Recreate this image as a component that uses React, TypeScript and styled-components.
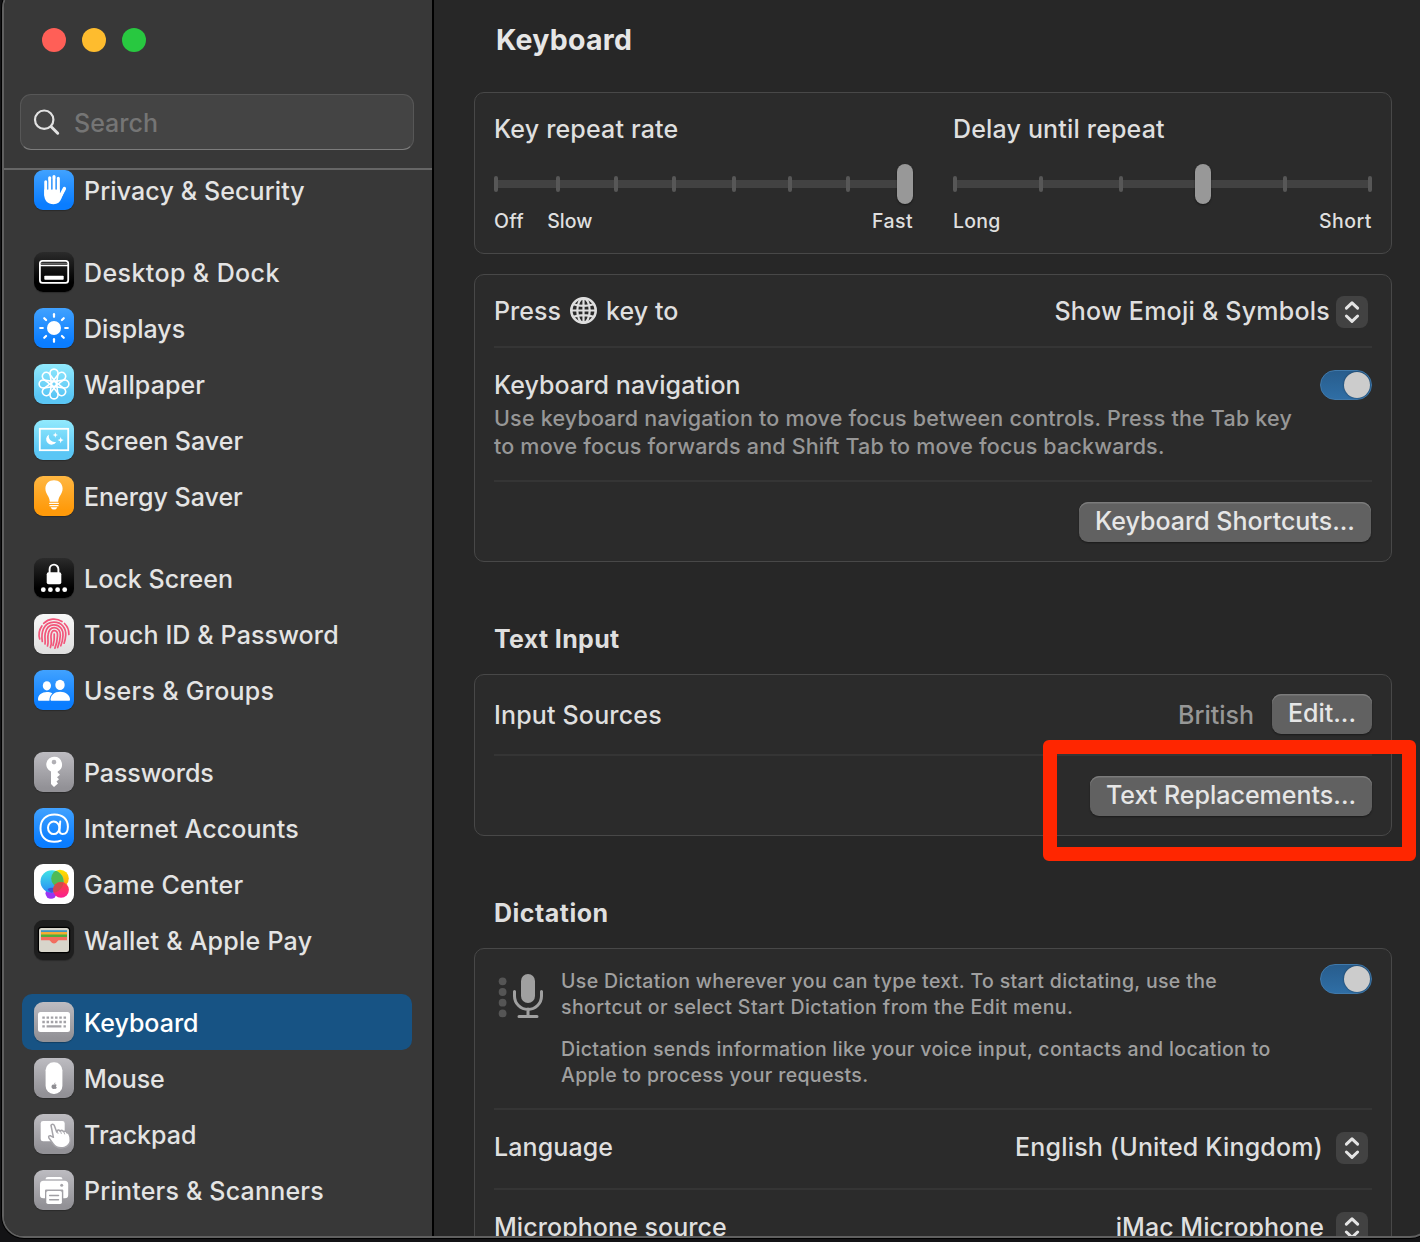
import React from "react";
import styled, { createGlobalStyle, css } from "styled-components";

const GlobalStyle = createGlobalStyle`
  html, body { margin: 0; padding: 0; background: #131315; overflow: hidden; }
  * { box-sizing: border-box; }
  body { font-family: Inter, "Liberation Sans", sans-serif; font-size: 25px; font-weight: 450; color: #dfdfdf; }
`;

const Desktop = styled.div`
  width: 1420px;
  height: 1242px;
  overflow: hidden;
  background: #131315;
  display: flex;
`;

const Window = styled.div`
  display: flex;
  flex: none;
  width: 1430px;
  height: 1252px;
  margin: -14px 0 0 2px;
  border: 2px solid #606060;
  border-radius: 22px;
  box-shadow: 0 0 0 1px #000;
  background: #272727;
  overflow: hidden;
`;

const Sidebar = styled.aside`
  flex: none;
  width: 430px;
  padding-top: 12px;
  display: flex;
  flex-direction: column;
  background: #383838;
  border-right: 2px solid #000;
`;

const TrafficLights = styled.div`
  display: flex;
  gap: 16px;
  padding: 28px 0 0 38px;
`;

const Light = styled.span<{ $color: string }>`
  width: 24px;
  height: 24px;
  border-radius: 50%;
  background: ${(p) => p.$color};
`;

const SearchField = styled.div`
  display: flex;
  align-items: center;
  gap: 13px;
  height: 56px;
  margin: 42px 18px 0 16px;
  padding: 0 12px;
  border: 1px solid #575757;
  border-bottom-color: #7c7c7c;
  border-radius: 11px;
  background: #444444;
`;

type TextProps = { $track?: number };

const tracking = css<TextProps>`
  white-space: nowrap;
  letter-spacing: ${(p) => p.$track ?? 0}px;
`;

const Placeholder = styled.span<TextProps>`
  color: #757575;
  padding-top: 1px;
  ${tracking}
`;

const List = styled.nav`
  display: flex;
  flex-direction: column;
  gap: 26px;
  margin-top: 18px;
  border-top: 2px solid #666666;
`;

const Group = styled.div`
  display: flex;
  flex-direction: column;
  &:first-child { margin-top: -8px; }
`;

const Item = styled.div<{ $selected?: boolean }>`
  display: flex;
  align-items: center;
  gap: 10px;
  height: 56px;
  margin: 0 20px 0 18px;
  padding-left: 12px;
  border-radius: 10px;
  color: ${(p) => (p.$selected ? "#ffffff" : "#e4e4e4")};
  background: ${(p) => (p.$selected ? "#175384" : "transparent")};
`;

const ItemLabel = styled.span<TextProps>`
  padding-top: 1px;
  ${tracking}
`;

const Tile = styled.span<{ $fill: string }>`
  display: flex;
  align-items: center;
  justify-content: center;
  flex: none;
  width: 40px;
  height: 40px;
  border-radius: 9px;
  background: ${(p) => p.$fill};
  box-shadow: 0 1px 1px rgba(0, 0, 0, 0.25);
  svg { display: block; }
`;

const Main = styled.main`
  flex: none;
  width: 986px;
  padding: 12px 28px 0 40px;
  display: flex;
  flex-direction: column;
`;

const Title = styled.h1<TextProps>`
  flex: none;
  margin: 0 0 0 22px;
  height: 92px;
  padding-top: 21px;
  font-size: 28.5px;
  line-height: 38px;
  font-weight: 680;
  color: #e6e6e6;
  ${tracking}
`;

const Heading = styled.h2<TextProps>`
  flex: none;
  margin: 0 0 0 20px;
  height: 112px;
  padding-top: 61px;
  font-size: 25px;
  line-height: 32px;
  font-weight: 650;
  color: #dfdfdf;
  ${tracking}
`;

const Card = styled.section<{ $height: number }>`
  flex: none;
  height: ${(p) => p.$height}px;
  padding: 0 19px;
  border: 1px solid #484848;
  border-radius: 10px;
  background: #2b2b2b;
  & + & { margin-top: 20px; }
`;

const SliderPair = styled.div`
  display: grid;
  grid-template-columns: 419px 419px;
  column-gap: 40px;
  padding-top: 20px;
`;

const SliderLabel = styled.div<TextProps>`
  height: 32px;
  line-height: 32px;
  ${tracking}
`;

const Track = styled.div`
  position: relative;
  height: 8px;
  margin: 35px 0 17px;
  background: #424242;
`;

const Tick = styled.i`
  position: absolute;
  top: -4px;
  width: 4px;
  height: 16px;
  border-radius: 2px;
  background: #575757;
`;

const Thumb = styled.i`
  position: absolute;
  top: -16px;
  width: 16px;
  height: 40px;
  border-radius: 8px;
  background: #989898;
  box-shadow: 0 1px 2px rgba(0, 0, 0, 0.5);
`;

const Legend = styled.div`
  display: flex;
  justify-content: space-between;
  height: 32px;
  line-height: 32px;
  font-size: 19.5px;
`;

const LegendGroup = styled.span`
  display: flex;
  gap: 23px;
`;

const LegendText = styled.span<TextProps>`
  ${tracking}
`;

const Row = styled.div<{ $height: number; $line?: boolean; $shift?: number }>`
  display: flex;
  align-items: center;
  justify-content: space-between;
  height: ${(p) => p.$height}px;
  padding-top: ${(p) => Math.max(p.$shift ?? 0, 0) * 2}px;
  padding-bottom: ${(p) => Math.max(-(p.$shift ?? 0), 0) * 2}px;
  border-bottom: ${(p) => (p.$line ? "2px solid #353535" : "none")};
`;

const TopRow = styled(Row)<{ $pad: number }>`
  align-items: flex-start;
  padding-top: ${(p) => p.$pad}px;
`;

const RowLabel = styled.span<TextProps>`
  display: flex;
  align-items: center;
  line-height: 32px;
  ${tracking}
  svg { margin: 0 9px 1px; display: block; }
`;

const Value = styled.span<TextProps & { $gap: number }>`
  margin-right: ${(p) => p.$gap}px;
  ${tracking}
`;

const Muted = styled.span<TextProps>`
  color: #979797;
  margin-right: 18px;
  padding-top: 2px;
  ${tracking}
`;

const Trailing = styled.div<{ $inset?: number; $raise?: number }>`
  display: flex;
  align-items: center;
  margin-left: auto;
  margin-right: ${(p) => p.$inset ?? 0}px;
  margin-top: ${(p) => -(p.$raise ?? 0)}px;
`;

const Stepper = styled.span`
  display: flex;
  align-items: center;
  justify-content: center;
  width: 32px;
  height: 32px;
  margin-top: 2px;
  border-radius: 8px;
  background: #424242;
`;

const Switch = styled.span`
  display: flex;
  justify-content: flex-end;
  flex: none;
  width: 52px;
  height: 30px;
  padding: 1px;
  border: 1px solid #4079ab;
  border-radius: 15px;
  background: linear-gradient(#285d8d, #2f6ea5);
`;

const Knob = styled.i`
  width: 26px;
  height: 26px;
  border-radius: 50%;
  background: #cccccc;
  box-shadow: 0 0 2px rgba(0, 0, 0, 0.5);
`;

const Button = styled.button<TextProps & { $width: number }>`
  width: ${(p) => p.$width}px;
  height: 40px;
  padding: 0 0 2px;
  border: 0;
  border-radius: 9px;
  font: inherit;
  line-height: 36px;
  color: #e6e6e6;
  background: #616161;
  box-shadow: inset 0 1.5px 0 #7b7b7b, 0 1px 2px rgba(0, 0, 0, 0.4);
  ${tracking}
`;

const NavText = styled.div`
  display: flex;
  flex-direction: column;
`;

const HelpText = styled.div`
  display: flex;
  flex-direction: column;
  margin-top: 3px;
`;

const Help = styled.span<TextProps>`
  font-size: 21.5px;
  line-height: 28px;
  color: #979797;
  ${tracking}
`;

const DictationText = styled.div`
  display: flex;
  flex-direction: column;
  gap: 16px;
  margin-left: 16px;
`;

const Paragraph = styled.div`
  display: flex;
  flex-direction: column;
`;

const Small = styled.span<TextProps>`
  font-size: 19.5px;
  line-height: 26px;
  color: #a0a0a0;
  ${tracking}
`;

const Callout = styled.div`
  position: absolute;
  left: 1043px;
  top: 740px;
  width: 373px;
  height: 121px;
  border: 14px solid #ff2600;
  border-radius: 6px;
`;

const Icon = ({ children }: { children: React.ReactNode }) => (
  <svg width="40" height="40" viewBox="0 0 40 40" fill="none" strokeLinecap="round" strokeLinejoin="round">
    {children}
  </svg>
);

const Chevrons = () => (
  <svg width="32" height="32" viewBox="0 0 32 32" fill="none" stroke="#e4e4e4" strokeWidth="3" strokeLinecap="round" strokeLinejoin="round">
    <path d="M10.4 12.2 16 6.8l5.6 5.4M10.4 20 16 25.4l5.6-5.4" />
  </svg>
);

const Globe = () => (
  <svg width="27" height="27" viewBox="0 0 27 27" fill="none" stroke="#dfdfdf" strokeWidth="2.2">
    <circle cx="13.5" cy="13.5" r="12.2" strokeWidth="2.6" />
    <ellipse cx="13.5" cy="13.5" rx="6.2" ry="12.2" />
    <path d="M13.5 1v25M1 13.5h25M3.2 7.2q10.3 3.4 20.6 0M3.2 19.8q10.3-3.4 20.6 0" />
  </svg>
);

const MicIcon = () => (
  <svg width="51" height="52" viewBox="0 0 51 52" fill="none">
    <g fill="#555555">
      <circle cx="8.6" cy="13.3" r="3.9" />
      <circle cx="8.6" cy="24" r="3.9" />
      <circle cx="8.6" cy="34.7" r="3.9" />
      <circle cx="8.6" cy="45.4" r="3.9" />
    </g>
    <rect x="27" y="6" width="14" height="29" rx="7" fill="#a0a0a0" />
    <path d="M20.5 23.5v4.5a13.3 13.3 0 0 0 27 0v-4.5M34 41v7M25 48.500h18" stroke="#a0a0a0" strokeWidth="3" strokeLinecap="round" />
  </svg>
);

const SearchIcon = () => (
  <svg width="28" height="28" viewBox="0 0 28 28" fill="none" stroke="#e2e2e2" strokeLinecap="round">
    <circle cx="11.2" cy="11.7" r="9.2" strokeWidth="2.200" />
    <path d="m18.200 18.700 6.500 6.500" strokeWidth="3" />
  </svg>
);

const HandIcon = () => (
  <Icon>
    <g stroke="#fff" strokeWidth="3.1">
      <path d="M11.8 11.8V25M15.7 7.8V22M20 6.6V22M24.3 8.3V22" />
      <path d="M30.400 18.600 27 25" strokeWidth="3.4" />
    </g>
    <path d="M10.25 19.500h15.6v3.5l1.5.3 3.6-3.7-3.4 8.7c-1.5 3.8-3.9 5.9-8 5.9-5.8 0-9.3-3.6-9.3-9.5z" fill="#fff" />
    <path d="M13.75 11v8M17.85 9v10M22.15 9v10" stroke="#2f93fb" strokeWidth=".9" />
  </Icon>
);

const DockIcon = () => (
  <Icon>
    <rect x="5.9" y="8.9" width="28.3" height="22" rx="2.6" stroke="#fff" strokeWidth="1.8" />
    <path d="M6 13.600h28" stroke="#fff" strokeWidth="1.5" />
    <path d="M7 11.300h26" stroke="#777" strokeWidth="1" />
    <rect x="10.3" y="23.8" width="19.4" height="4" rx=".8" fill="#fff" />
  </Icon>
);

const SunIcon = () => (
  <Icon>
    <circle cx="20" cy="20" r="7" fill="#fff" />
    {[0, 45, 90, 135, 180, 225, 270, 315].map((a) => (
      <path key={a} d="M20 6.200v2.6" stroke="#fff" strokeWidth="2.2" transform={`rotate(${a} 20 20)`} />
    ))}
  </Icon>
);

const FlowerIcon = () => (
  <Icon>
    {[0, 45, 90, 135, 180, 225, 270, 315].map((a) => (
      <path
        key={a}
        d="M17.7 22 16.1 10A4 4 0 1 1 23.900 10L22.300 22"
        stroke="#fff"
        strokeWidth="1.6"
        transform={`rotate(${a} 20 20)`}
      />
    ))}
  </Icon>
);

const SaverIcon = () => (
  <Icon>
    <rect x="5.8" y="8.8" width="28.4" height="21.4" stroke="#fff" strokeWidth="1.8" strokeLinejoin="miter" />
    <path d="M15 14.500a5.4 5.4 0 1 0 7.3 7.3 5.9 5.9 0 0 1-7.3-7.3z" fill="#fff" />
    <path d="m21.300 12.300.7 2 2 .7-2 .7-.7 2-.7-2-2-.7 2-.7zM26.700 17l.8 2.300 2.300.8-2.300.8-.8 2.300-.8-2.300-2.300-.8 2.300-.8z" fill="#fff" />
  </Icon>
);

const BulbIcon = () => (
  <Icon>
    <path d="M20 4.300c-5 0-8.600 3.500-8.600 8.200 0 5.700 3.900 7 4.400 13.200h8.400c.5-6.200 4.400-7.500 4.400-13.200 0-4.700-3.600-8.200-8.600-8.200z" fill="#fff" />
    <path d="M15.700 27.400h8.600M16 29.700h8" stroke="#fff" strokeWidth="1.3" />
    <path d="M16.600 31.300h6.800q-.8 2.300-3.400 2.300t-3.400-2.300z" fill="#fff" />
  </Icon>
);

const LockIcon = () => (
  <Icon>
    <rect x="12.7" y="14.2" width="14.6" height="12" rx="2" fill="#fff" />
    <path d="M15.600 15v-3.700a4.400 4.700 0 0 1 8.800 0V15" stroke="#fff" strokeWidth="1.9" />
    <g fill="#fff">
      <circle cx="9.3" cy="31.7" r="2.4" />
      <circle cx="16.4" cy="31.7" r="2.4" />
      <circle cx="23.6" cy="31.7" r="2.4" />
      <circle cx="30.7" cy="31.7" r="2.4" />
    </g>
  </Icon>
);

const FingerprintIcon = () => (
  <Icon>
    <g stroke="#f2567a" strokeWidth="1.7">
      <path d="M9.700 9.300A14.800 14.800 0 0 1 28 7.500" />
      <path d="M30.500 9.500A14.800 14.800 0 0 1 34.900 20.500" />
      <path d="M5.700 25A15 15 0 0 1 7.900 12" />
      <path d="M8.300 27.500C7 19 9 8.100 20 8.100c8 0 12.300 6.400 11.700 13.400-.2 3-.7 5.400-1.600 7.700" />
      <path d="M11 30c.8-3.500-.8-5.500.2-10.500C12.200 14.300 15.500 10.900 20 10.900c6 0 9.400 4.600 9 10.600-.2 3.900-1 7.200-2.200 10.300" />
      <path d="M13.500 32c1.500-4.500-.3-7 .6-11.500.7-4.200 3-6.800 6-6.800 4.200 0 6.500 3.300 6.200 7.800-.2 4.500-1.200 8.500-2.600 12" />
      <path d="M16.400 33.500c2-5 .2-8 .6-12 .3-3 1.500-4.900 3.200-4.900 2.500 0 3.500 2 3.300 5-.2 4.700-1.100 9-2.600 12.600" />
      <path d="M20.200 20c.4 4.500-.1 8-1.200 11.500" />
    </g>
  </Icon>
);

const UsersIcon = () => (
  <Icon>
    <g fill="#fff">
      <ellipse cx="12.9" cy="15.8" rx="4.1" ry="4.6" />
      <ellipse cx="26" cy="14.9" rx="4.7" ry="5.2" />
      <path d="M4 29.200c0-4.300 4-7.200 8.900-7.200 2.100 0 4 .5 5.500 1.400-1.800 1.400-2.900 3.600-3 7.400H5.200c-.8 0-1.200-.6-1.200-1.600z" />
      <path d="M16.500 29.500c0-4.300 4.100-7.800 9.600-7.800s9.900 3.500 9.900 7.800c0 .9-.4 1.300-1.200 1.300H17.700c-.8 0-1.200-.4-1.200-1.300z" />
    </g>
  </Icon>
);

const KeyIcon = () => (
  <Icon>
    <path
      fillRule="evenodd"
      fill="#fff"
      d="M20 4.800a7.700 7.700 0 0 0-3 14.800v12.300l3 3 4-3.500-1.500-1.900 2.500-2.300-2-2 3-2.400-2.300-2.200V19.400A7.700 7.700 0 0 0 20 4.800zm0 3a2.300 2.300 0 1 1 0 4.600 2.300 2.300 0 0 1 0-4.600z"
    />
  </Icon>
);

const AtIcon = () => (
  <Icon>
    <g stroke="#fff" strokeWidth="2">
      <ellipse cx="19.7" cy="19.8" rx="5.7" ry="6.3" />
      <path d="M26.200 13.500 25.500 22c-.2 2.500.8 4 3.100 4 3.300 0 5.300-2.700 5.300-7.300 0-7.300-5.200-12.300-13.300-12.300C12 6.400 6.500 11.800 6.500 20.200c0 8.600 5.500 13.600 13.700 13.600 2.800 0 5-.4 6.600-1.100" />
    </g>
  </Icon>
);

const GameIcon = () => (
  <Icon>
    <defs>
      <linearGradient id="gcBlue" x1="0" y1="0" x2="0" y2="1">
        <stop offset="0" stopColor="#3fe3e6" />
        <stop offset="1" stopColor="#2b8cf5" />
      </linearGradient>
      <linearGradient id="gcYellow" x1="0" y1="0" x2="0" y2="1">
        <stop offset="0" stopColor="#fbe600" />
        <stop offset="1" stopColor="#ff9d0a" />
      </linearGradient>
      <linearGradient id="gcRed" x1="0" y1="0" x2="0" y2="1">
        <stop offset="0" stopColor="#ff453d" />
        <stop offset="1" stopColor="#fa1d92" />
      </linearGradient>
      <clipPath id="gcClip"><ellipse cx="18" cy="17.5" rx="11.5" ry="11.2" /></clipPath>
    </defs>
    <circle cx="17" cy="29.3" r="5.5" fill="#9b35f2" />
    <circle cx="26" cy="14.5" r="8.8" fill="url(#gcYellow)" />
    <ellipse cx="18" cy="17.5" rx="11.5" ry="11.2" fill="url(#gcBlue)" />
    <circle cx="26" cy="14.5" r="8.8" fill="#4fbb55" clipPath="url(#gcClip)" />
    <path d="M13.500 25q5-2.500 8.500 0-1 3-4.500 3.700-3-.6-4-3.700z" fill="#3a55d8" />
    <circle cx="27" cy="25.8" r="7.9" fill="url(#gcRed)" />
    <circle cx="27" cy="25.8" r="7.9" fill="#c3504a" fillOpacity=".75" clipPath="url(#gcClip)" />
  </Icon>
);

const WalletIcon = () => (
  <Icon>
    <rect x="3.8" y="6.8" width="32.4" height="26.4" rx="3.5" fill="#000" />
    <rect x="5" y="8" width="30" height="24" rx="2.5" fill="#d8d5cb" />
    <rect x="7" y="10.2" width="26" height="3" fill="#3e94c0" />
    <rect x="7" y="12" width="26" height="3" fill="#f5ab32" />
    <rect x="7" y="14.5" width="26" height="3" fill="#4fae3c" />
    <path d="M7 17h26v3.300H25q-1 0-1.700 1.200-1.200 2-3.300 2t-3.300-2q-.7-1.200-1.700-1.200H7z" fill="#f26d5f" />
  </Icon>
);

const KeyboardIcon = () => (
  <Icon>
    <rect x="4" y="10" width="32" height="20" rx="2.5" fill="#fff" />
    <g stroke="#a3a2a7" strokeWidth="2.3" strokeLinecap="butt">
      <path d="M8.300 15.700h24" strokeDasharray="2.5 1.75" />
      <path d="M8.300 20h24" strokeDasharray="2.5 1.75" />
      <path d="M8.300 24.400h2.500M12.600 24.400h14.800M29.500 24.400h2.400" />
    </g>
  </Icon>
);

const MouseIcon = () => (
  <Icon>
    <rect x="11.6" y="4.3" width="16.8" height="31.6" rx="8" fill="#fff" />
    <path d="M20 26.700c1-.6 2.200-.4 2.700.4-1 .8-.8 2 .1 2.500-.5 1.400-1.300 1.700-2.600 1.200-1.300.5-2.100.1-2.600-1.200-.5-1.700.6-3.600 2.400-2.900z" fill="#8f8e93" />
    <path d="M20.200 26.300q0-1.400 1.300-1.700 0 1.300-1.300 1.700z" fill="#8f8e93" />
  </Icon>
);

const TrackpadIcon = () => (
  <Icon>
    <rect x="6.7" y="7" width="24" height="20.3" rx="2.4" fill="#fff" />
    <path
      d="M17 11.300c.5-1.400 2.600-1.500 3.200 0L22.700 18l.5-1.400c.9-.9 2.200-.6 2.800.5l.5-.4c1.200-.7 2.400-.2 2.900 1l.6-.3c1.300-.5 2.400 0 2.800 1.300l.5.1c1.700.3 2.300 2 2.700 4.400 1 5.200-1.200 9-5.600 10.200-4.200 1.100-8.700-.2-11.300-3.700l-4.300-6c-.6-1.200.5-2.400 1.800-1.900l2.800 1.500z"
      fill="#fff"
      stroke="#a6a5aa"
      strokeWidth="1.5"
    />
    <path d="m23.200 17 .8 2.500M26.500 17l.8 2.500M30 18l.6 2" stroke="#a6a5aa" strokeWidth=".9" />
  </Icon>
);

const PrinterIcon = () => (
  <Icon>
    <path d="M11.500 9.300q0-2.300 2.500-2.300h12q2.500 0 2.500 2.300z" fill="#fff" />
    <path d="M9.500 10.800h21.200q3.500 0 3.500 3.500V25q0 3.300-3.300 3.300h-1.600V20.500q0-1-1-1H12q-1 0-1 1v7.800H9.300q-3.300 0-3.300-3.300V14.300q0-3.500 3.500-3.500z" fill="#fff" />
    <circle cx="27.7" cy="15.3" r="1.5" fill="#a6a5aa" />
    <rect x="12.3" y="21" width="15.6" height="13" rx="1.7" fill="#fff" />
    <path d="M15.700 25.500h8.800M15.700 29.800h8.800" stroke="#a09fa4" strokeWidth="1.5" />
  </Icon>
);

const blue = "linear-gradient(#41a2ff, #0a7dff 85%)";
const black = "linear-gradient(#2b2b2b, #000 75%)";
const cyan = "linear-gradient(#92eafd, #5ac6f5 80%)";
const grey = "linear-gradient(#bdbcc1, #929196 90%)";

type Entry = { label: string; fill: string; icon: React.ReactNode; track?: number; selected?: boolean };

const groups: Entry[][] = [
  [{ label: "Privacy & Security", fill: blue, icon: <HandIcon />, track: 0.12 }],
  [
    { label: "Desktop & Dock", fill: black, icon: <DockIcon />, track: 0.4 },
    { label: "Displays", fill: blue, icon: <SunIcon /> },
    { label: "Wallpaper", fill: cyan, icon: <FlowerIcon />, track: 0.08 },
    { label: "Screen Saver", fill: cyan, icon: <SaverIcon /> },
    { label: "Energy Saver", fill: "linear-gradient(#ffb742, #ff9a0a 85%)", icon: <BulbIcon /> },
  ],
  [
    { label: "Lock Screen", fill: black, icon: <LockIcon />, track: 0.05 },
    { label: "Touch ID & Password", fill: "linear-gradient(#f8f8f8, #dedede)", icon: <FingerprintIcon />, track: 0.13 },
    { label: "Users & Groups", fill: blue, icon: <UsersIcon />, track: 0.28 },
  ],
  [
    { label: "Passwords", fill: grey, icon: <KeyIcon />, track: -0.1 },
    { label: "Internet Accounts", fill: blue, icon: <AtIcon />, track: 0.1 },
    { label: "Game Center", fill: "#ffffff", icon: <GameIcon />, track: 0.2 },
    { label: "Wallet & Apple Pay", fill: "#1e1e1e", icon: <WalletIcon />, track: 0.25 },
  ],
  [
    { label: "Keyboard", fill: grey, icon: <KeyboardIcon />, selected: true },
    { label: "Mouse", fill: grey, icon: <MouseIcon />, track: -0.1 },
    { label: "Trackpad", fill: grey, icon: <TrackpadIcon /> },
    { label: "Printers & Scanners", fill: grey, icon: <PrinterIcon />, track: 0.2 },
  ],
];

const Slider = ({ ticks, thumb }: { ticks: number[]; thumb: number }) => (
  <Track>
    {ticks.map((x) => (
      <Tick key={x} style={{ left: x }} />
    ))}
    <Thumb style={{ left: thumb }} />
  </Track>
);

export default function App() {
  return (
    <>
      <GlobalStyle />
      <Desktop>
        <Window>
          <Sidebar>
            <TrafficLights>
              <Light $color="#ff5f57" />
              <Light $color="#febc2e" />
              <Light $color="#28c840" />
            </TrafficLights>
            <SearchField>
              <SearchIcon />
              <Placeholder>Search</Placeholder>
            </SearchField>
            <List>
              {groups.map((group, i) => (
                <Group key={i}>
                  {group.map((entry) => (
                    <Item key={entry.label} $selected={entry.selected}>
                      <Tile $fill={entry.fill}>{entry.icon}</Tile>
                      <ItemLabel $track={entry.track}>{entry.label}</ItemLabel>
                    </Item>
                  ))}
                </Group>
              ))}
            </List>
          </Sidebar>
          <Main>
            <Title $track={0.25}>Keyboard</Title>
            <Card $height={162}>
              <SliderPair>
                <div>
                  <SliderLabel $track={0.17}>Key repeat rate</SliderLabel>
                  <Slider ticks={[0, 62, 120, 178, 238, 294, 352]} thumb={403} />
                  <Legend>
                    <LegendGroup>
                      <LegendText $track={0.4}>Off</LegendText>
                      <LegendText>Slow</LegendText>
                    </LegendGroup>
                    <LegendText $track={0.4}>Fast</LegendText>
                  </Legend>
                </div>
                <div>
                  <SliderLabel $track={0.17}>Delay until repeat</SliderLabel>
                  <Slider ticks={[0, 86, 166, 330, 415]} thumb={242} />
                  <Legend>
                    <LegendText $track={0.2}>Long</LegendText>
                    <LegendText $track={0.5}>Short</LegendText>
                  </Legend>
                </div>
              </SliderPair>
            </Card>
            <Card $height={288}>
              <Row $height={73} $shift={0.7} $line>
                <RowLabel $track={0.05}>
                  Press <Globe /> key to
                </RowLabel>
                <Trailing $inset={4}>
                  <Value $gap={6} $track={0.23}>Show Emoji &amp; Symbols</Value>
                  <Stepper><Chevrons /></Stepper>
                </Trailing>
              </Row>
              <TopRow $height={134} $pad={21} $line>
                <NavText>
                  <RowLabel $track={0.07}>Keyboard navigation</RowLabel>
                  <HelpText>
                    <Help $track={0.2}>Use keyboard navigation to move focus between controls. Press the Tab key</Help>
                    <Help $track={0.18}>to move focus forwards and Shift Tab to move focus backwards.</Help>
                  </HelpText>
                </NavText>
                <Trailing $raise={-1}>
                  <Switch><Knob /></Switch>
                </Trailing>
              </TopRow>
              <Row $height={80}>
                <Trailing $inset={1}>
                  <Button $width={292}>Keyboard Shortcuts...</Button>
                </Trailing>
              </Row>
            </Card>
            <Heading $track={0.35}>Text Input</Heading>
            <Card $height={162}>
              <Row $height={81} $line>
                <RowLabel $track={0.17}>Input Sources</RowLabel>
                <Trailing $raise={1}>
                  <Muted>British</Muted>
                  <Button $width={100}>Edit...</Button>
                </Trailing>
              </Row>
              <Row $height={80}>
                <Trailing>
                  <Button $width={282}>Text Replacements...</Button>
                </Trailing>
              </Row>
            </Card>
            <Heading $track={0.5}>Dictation</Heading>
            <Card $height={320}>
              <TopRow $height={161} $pad={19} $line>
                <MicIcon />
                <DictationText>
                  <Paragraph>
                    <Small $track={0.35}>Use Dictation wherever you can type text. To start dictating, use the</Small>
                    <Small $track={0.41}>shortcut or select Start Dictation from the Edit menu.</Small>
                  </Paragraph>
                  <Paragraph>
                    <Small $track={0.36}>Dictation sends information like your voice input, contacts and location to</Small>
                    <Small $track={0.33}>Apple to process your requests.</Small>
                  </Paragraph>
                </DictationText>
                <Trailing $raise={4}>
                  <Switch><Knob /></Switch>
                </Trailing>
              </TopRow>
              <Row $height={80} $shift={-2} $line>
                <RowLabel $track={0.1}>Language</RowLabel>
                <Trailing $inset={4}>
                  <Value $gap={13} $track={0.17}>English (United Kingdom)</Value>
                  <Stepper><Chevrons /></Stepper>
                </Trailing>
              </Row>
              <Row $height={78} $shift={-2}>
                <RowLabel $track={0.06}>Microphone source</RowLabel>
                <Trailing $inset={4}>
                  <Value $gap={12} $track={0.05}>iMac Microphone</Value>
                  <Stepper><Chevrons /></Stepper>
                </Trailing>
              </Row>
            </Card>
          </Main>
        </Window>
        <Callout />
      </Desktop>
    </>
  );
}
